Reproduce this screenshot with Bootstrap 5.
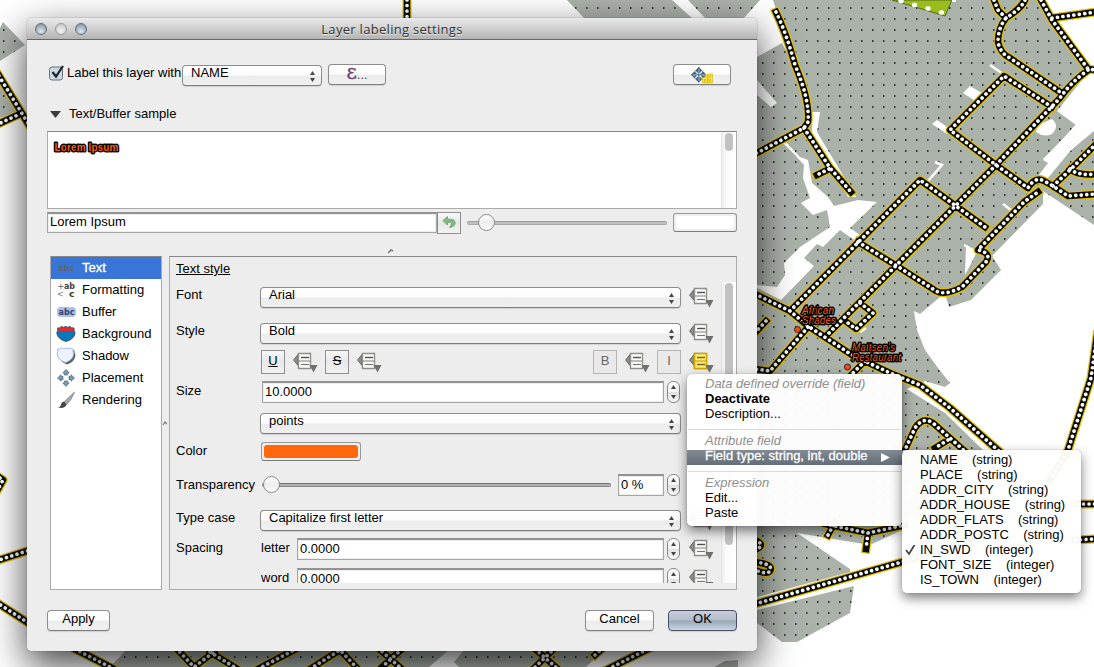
<!DOCTYPE html>
<html lang="en">
<head>
<meta charset="utf-8">
<title>Layer labeling settings</title>
<link rel="stylesheet" href="https://cdn.jsdelivr.net/npm/bootstrap@5.3.0/dist/css/bootstrap.min.css">
<script src="https://cdn.jsdelivr.net/npm/bootstrap@5.3.0/dist/js/bootstrap.bundle.min.js"></script>
<style>
body{width:1094px;height:667px;overflow:hidden;position:relative;background:#fff;color:#000;font:13px/15px "Liberation Sans",Arial,sans-serif}
.map-canvas{position:absolute;left:0;top:0}
.dialog-win{position:absolute;left:27px;top:18px;width:730px;height:633px;background:#ededed;border-radius:5px 5px 4px 4px;box-shadow:0 0 1px rgba(0,0,0,.7),0 14px 38px rgba(0,0,0,.75)}
.title-strip{height:22px;border-radius:5px 5px 0 0;background:linear-gradient(#e9e9e9,#d3d3d3 45%,#b3b3b3);border-bottom:1px solid #686868;padding-left:8px;position:relative}
.title-strip h1{font:13px/20px "Open Sans","Noto Sans",sans-serif;color:#333;margin:0;width:100%;text-align:center;position:absolute;left:0;top:1px;text-shadow:0 1px 0 #e8e8e8;letter-spacing:.3px}
.light{width:12px;height:12px;border-radius:50%;border:1px solid #5f6a75;background:radial-gradient(circle at 50% 75%,#dde6ee,#8798a8 85%);margin-right:8px}
.light.mid{border-color:#999;background:radial-gradient(circle at 50% 70%,#f2f2f2,#c5c5c5 90%)}
.mac-btn{height:21px;border:1px solid #8d8d8d;border-bottom-color:#7d7d7d;border-radius:4px;background:linear-gradient(#fff 0,#fcfcfc 48%,#ececec 52%,#f0f0f0 100%);box-shadow:0 1px 1px rgba(0,0,0,.12);display:flex;align-items:center;justify-content:center;padding:0 0 4px;color:#000;font-size:13px;line-height:15px;flex:none}
.mac-btn.ok{border-color:#4b4f66;background:linear-gradient(#c6ced9 0,#b3bdca 48%,#98a6b7 52%,#c9d6e2 100%)}
.combo{justify-content:space-between;padding:0 6px 0 8px}
.combo span{margin-top:-7px}
.combo svg{margin-top:1px}
.line-in{height:22px;background:#fff;border:1px solid #a6a6a6;border-top:2px solid #929292;box-shadow:inset 0 0 0 1px #ededed;padding:0 0 0 2px;line-height:17px;flex:none}
.spin{width:13px;height:22px;border:1px solid #888;border-radius:6px;background:linear-gradient(#fff,#f6f6f6 48%,#e2e2e2 52%,#f8f8f8);margin-left:3px;display:flex;justify-content:center;align-items:center;flex:none}
.tool{width:24px;height:24px;border:1px solid #8f8f8f;background:linear-gradient(#f7f7f7,#e8e8e8 50%,#f2f2f2);text-align:center;line-height:20px;flex:none}
.tool.dim{border-color:#b4b4b4;color:#666;background:#e9e9e9}
.track{height:4px;border-radius:2px;background:#c0c0c0;border:1px solid #aaa;border-top-color:#9b9b9b;position:relative;flex:none}
.track.strong{border-color:#888;border-top-color:#707070;background:#b0b0b0}
.knob{position:absolute;top:-8px;width:17px;height:17px;border-radius:50%;border:1px solid #8b8b8b;background:linear-gradient(#fff,#eee 50%,#fafafa)}
.swatch{border:1px solid #999;border-bottom-color:#7c7c7c;border-radius:3px;background:#eee;padding:2px;flex:none}
.swatch i{display:block;height:100%;border-radius:3px}
.preview-box{width:690px;height:78px;margin:5px 0 3px 20px;background:#fff;border:1px solid #aaa;border-top-color:#878787}
.halo{font-weight:bold;font-size:10px;fill:#ff5d00;stroke:#000;stroke-width:2.8px;paint-order:stroke;stroke-linejoin:round}
.scroll-lane{width:15px;background:linear-gradient(90deg,#ededed,#fafafa 30%,#fff);border-left:1px solid #e4e4e4;padding:1px 0 0 3px;flex:none}
.scroll-lane i{display:block;width:8px;border-radius:4px;background:#c1c1c1}
.pages{width:112px;height:334px;background:#fff;border:1px solid #aaa;border-top-color:#878787;flex:none}
.pages div{height:22px;display:flex;align-items:center;padding-left:5px;padding-bottom:1px}
.pages div svg{margin-right:5px;flex:none}
.pages .picked{background:#3875d7;color:#fff;-webkit-text-stroke:.35px #fff}
.form-frame{width:568px;height:334px;border:1px solid #aaa;border-top-color:#878787;flex:none}
.form-view{height:326px;overflow:hidden;width:551px}
.band{display:flex;align-items:center;padding-left:6px}
.band>label{width:84px;flex:none}
.up5{padding-bottom:6px}
.up3{padding-bottom:3px}
.dd{width:26px;height:21px;flex:none;margin-left:8px}
.mac-menu{position:absolute;background:rgba(255,255,255,.965);border-radius:5px;box-shadow:0 0 1px rgba(0,0,0,.5),0 5px 12px rgba(0,0,0,.5);white-space:pre}
.mac-menu div{height:15px;line-height:15px;padding-left:18px}
.mac-menu em{color:#8f8f8f}
.mac-menu hr{margin:0;border:0;border-top:1px solid #dadada;opacity:1}
.mac-menu .lit{background:linear-gradient(#828a94,#656d78);color:#fff;-webkit-text-stroke:.3px #fff;line-height:12px;position:relative}
</style>
</head>
<body>
<svg width="0" height="0" style="position:absolute">
<defs>
<g id="fieldIcon"><path d="M5 2.500 .6 8 5 13.500Z" fill="#8d8d8d" stroke="#666" stroke-width="1"/><path d="M5.500 1.500h12v15h-12Z" fill="#fff" stroke="#908f89" stroke-width="1.400"/><path d="M6 9h12" stroke="#908f89" stroke-width="1.200"/><path d="M8 5.500h8" stroke="#555" stroke-width="1.500"/><path d="M8 12.500h8" stroke="#777" stroke-width="1.200"/><path d="M16.500 13h8l-4 7.500Z" fill="#707070"/></g>
<g id="arrows"><path d="M0 4 2.500 0 5 4ZM0 7h5L2.500 11Z" fill="#444"/></g>
<g id="spinArrows"><path d="M0 4 2.500 0 5 4ZM0 10h5L2.500 14Z" fill="#444"/></g>
<g id="fourWay" fill="#7d9bb0" stroke="#4e6879" stroke-width=".7"><path id="headUp" d="M9 .5 12.200 4H10.700V6H7.300V4H5.800Z"/><use href="#headUp" transform="rotate(90 9 9)"/><use href="#headUp" transform="rotate(180 9 9)"/><use href="#headUp" transform="rotate(270 9 9)"/></g>
</defs></svg>

<svg class="map-canvas" width="1094" height="667" viewBox="0 0 1094 667">
<defs><pattern id="dots" width="11" height="11" patternUnits="userSpaceOnUse" x="0" y="0"><rect width="11" height="11" fill="#abb2aa"/><rect x="3" y="7" width="1" height="2" fill="#343934"/><rect x="4" y="7" width="1" height="2" fill="#6d736d"/></pattern></defs>
<g fill="url(#dots)">
<path d="M567 0H672L693 19H585ZM688 0H760L744 18 735 30 705 18ZM773 0H1043L1053 20 1090 70 1057 111 1076 125 1043 160 1048 163 1035 180 1094 131V225L1043 191 1043 204 992 256 1001 270 971 300 949 307 946 297 940 297 920 314 914 311 917 330 925 350 938 368 950 383 945 387 925 381 907 389 945 413 985 452 902 530 870 545 797 533 850 569 850 572 757 597V57L782 43 796 70Z"/>
<path d="M745 613 854 586 850 613 797 642H782L757 623ZM3 22 25 45 0 61V28ZM0 80 18 112 0 118ZM127 649H450L428 668H109ZM465 649H605L585 668H460L454 662ZM712 668 725 661 738 660V668Z"/>
</g>
<g fill="#fff">
<path d="M757 285 777 287 785 275 784 263 800 247 830 227 827 210 813 215 801 203 810 198 803 178 804 165 795 155 783 143 776 145 784 140 800 157 808 160 812 183 828 197 834 206 858 200 877 202 850 228 860 235 857 242 840 230 823 247 817 244 804 258 814 266 781 300 757 288Z"/>
<path d="M812 112 820 112 817 132 856 197 848 197 812 134ZM757 80 777 103 771 107 757 95ZM963 93 970 86 982 93 975 101ZM932 124 937 120 950 129 947 134ZM1038 125 1052 119Q1060 126 1052 134 1044 138 1036 132ZM966 245 977 252 965 275Z"/>
<path d="M1062 140 1094 104V122L1048 178 1035 180 1050 163 1043 159Z"/>
<path d="M928 181 942 165 935 162M990 65 1003 74M1003 204 1012 211M964 245 975 251M950 132 995 167M790 315 851 358M860 332 866 328" fill="none" stroke="#fff" stroke-width="2.500"/>
</g>
<path d="M892 0 945 16 952 0Z" fill="#9abb1c" stroke="#556b21"/><path d="M900.500 1h1M914 5h1M927.500 8.500h1M941 12.500h1M954 0h.1" stroke="#fff" stroke-width="4.500" stroke-linecap="round"/>
<defs><path id="roads" fill="none" d="M776 12Q786 32 795 65 810 100 808 122L804 128 755 154M804 128 830 168 851 192M829 169 817 175M994 0 998 10 1006 18M1025 0Q1022 8 1006 18 998 28 998 42 1000 53 1010 58L1060 92M1041 0 1052 20 1088 69 1096 70M1052 18 1096 12M1088 70Q1070 83 1060 98L996 165 826 336M1052 107 1004 76 950 130 996 165 1028 188Q1035 176 1044 181L1053 186 1068 196 1096 194M1053 186 1072 168 1096 144M1070 169Q1078 176 1096 174M790 311 920 180 985 227M858 242 897 266 936 291Q945 296 962 287L986 262Q992 253 978 250L1024 202 1038 192M755 294 790 311 808 326 852 355 890 373 920 385 950 408 1000 452M808 327 770 371 755 369M865 361 845 381M860 303 873 313 856 329 844 320M766 321 752 336M1097 335 1091 378 1068 450 1050 480M904 452 915 428Q923 416 933 423L968 454M948 440 935 448M1078 504 1096 504M1075 540 1096 539M828 535 835 522M825 524 868 533 905 525M868 533 866 549M755 604 902 562 970 540M755 540Q767 545 755 550M755 562Q774 564 770 571 767 575 755 570M0 478 3 480-2 489M-4 71 29 125M-4 125 20 114M-4 561 30 550M-4 602 30 624M407 0V20M75 649 112 668M176 648 194 667 214 652M210 652 236 668M258 669 296 649M310 669 340 650 358 669M378 648 402 669M402 649 382 667M535 649 558 669M555 648 533 669M595 655 605 646M608 669 652 647"/></defs>
<use href="#roads" stroke="#dfc100" stroke-width="9" stroke-linejoin="round" stroke-linecap="square"/>
<use href="#roads" stroke="#090909" stroke-width="6.500" stroke-linejoin="round" stroke-linecap="square"/>
<use href="#roads" stroke="#fff" stroke-width="3.700" stroke-linecap="round" stroke-linejoin="round" stroke-dasharray=".01 5.500"/>
<g fill="#ff4b0b" stroke="#222" stroke-width="1"><circle cx="797.500" cy="329.500" r="3"/><circle cx="847.500" cy="367" r="3"/></g>
<g class="halo" style="font-style:italic;font-weight:normal"><g stroke="#000"><text x="802" y="313.500" textLength="32">African</text><text x="802" y="323.500" textLength="34">Shades</text><text x="852" y="351" textLength="43">Mattsen's</text><text x="852" y="361" textLength="49">Restaurant</text></g></g>
</svg>

<main class="dialog-win">
<header class="title-strip d-flex align-items-center"><i class="light"></i><i class="light mid"></i><i class="light"></i><h1>Layer labeling settings</h1></header>

<div class="d-flex" style="padding:24px 0 0 22px;height:57px">
<svg width="16" height="18" viewBox="0 0 16 18"><rect x=".5" y="3" width="13" height="13" rx="2.500" fill="#cfd9e2" stroke="#657080"/><path d="M3.500 8 7 12.500 14 2" fill="none" stroke="#15222e" stroke-width="2.200"/></svg>
<span style="width:117px;padding:1px 0 0 2px;white-space:nowrap">Label this layer with</span>
<div class="mac-btn combo" style="width:140px;margin-top:1px"><span>NAME</span><svg width="5" height="11"><use href="#arrows"/></svg></div>
<div class="mac-btn" style="width:58px;margin-left:6px;padding-bottom:1px"><span style="font:20px/18px 'DejaVu Serif',serif;color:#69406f;margin-top:-5px;-webkit-text-stroke:.3px #69406f">ε</span><span style="color:#444">...</span></div>
<div class="mac-btn ms-auto" style="width:58px;margin-right:26px;padding:0"><svg width="22" height="18" viewBox="0 0 22 18"><g transform="translate(0,1) scale(.86)"><path d="M9 0 18 9 9 18 0 9Z" fill="#45647c"/><path d="M9 2v14M2 9h14M5 5l8 8M13 5l-8 8" stroke="#dce7ef" stroke-width="1.500"/><path d="M9 0v18M0 9h18" stroke="#45647c" stroke-width="1"/></g><path d="M11.500 12.500h4V8M12.500 12.500V16h3v-3M18 8v4h2.500V7.500M18 12.500h2.500V16H18Z" fill="none" stroke="#d6b100" stroke-width="2.400"/><path d="M11.500 12.500h4V8M12.500 12.500V16h3v-3M18 8v4h2.500V7.500M18 12.500h2.500V16H18Z" fill="none" stroke="#ffe347" stroke-width="1.200"/></svg></div>
</div>

<div class="d-flex align-items-center" style="height:25px;margin-top:4px;padding-left:23px"><svg width="11" height="7" style="margin-top:2px"><path d="M0 0H11L5.500 7Z" fill="#3d3d3d"/></svg><span style="margin-left:8px">Text/Buffer sample</span></div>

<section class="preview-box d-flex justify-content-between"><svg width="90" height="30"><text class="halo" x="6.500" y="19" textLength="64">Lorem Ipsum</text></svg><div class="scroll-lane"><i style="height:18px"></i></div></section>
<div class="d-flex align-items-center" style="height:21px;margin-left:20px">
<div class="line-in" style="width:390px;height:21px;line-height:16px">Lorem Ipsum</div>
<div class="tool" style="height:22px"><svg width="14" height="13" viewBox="0 0 14 13" style="display:block;margin:3px auto"><path d="M5.500 .5 .8 4.800 5.500 9V6.300H8.500Q11 6.800 7.500 11.500 13.500 10.500 13.200 6.500 12.500 3.200 8.500 3.200H5.500Z" fill="#82b986" stroke="#62a06a" stroke-width=".8"/></svg></div>
<div class="track" style="width:200px;margin-left:6px"><i class="knob" style="left:10px"></i></div>
<div class="swatch" style="width:64px;height:19px;margin-left:6px"><i style="background:#fff"></i></div>
</div>
<div style="height:23px"><svg width="6" height="5" style="display:block;margin-left:361px;transform:translateY(16px)"><path d="M0 4 3 1 5 2" fill="none" stroke="#777" stroke-width="1.500"/></svg></div>

<div class="d-flex" style="margin-left:23px">
<nav class="pages">
<div class="picked"><svg width="21" height="18"><text x="2" y="12" style="font:bold 9px 'DejaVu Sans'" fill="#5c6578" stroke="none" textLength="16" lengthAdjust="spacingAndGlyphs">abc</text></svg>Text</div>
<div><svg width="21" height="18"><text x="1" y="8" style="font:9px 'DejaVu Sans'" fill="#666">+</text><text x="8" y="8" style="font:bold 9px 'DejaVu Sans'" fill="#444" textLength="11" lengthAdjust="spacingAndGlyphs">ab</text><text x="1" y="16" style="font:8px 'DejaVu Sans'" fill="#777">&lt;</text><text x="13" y="16" style="font:bold 9px 'DejaVu Sans'" fill="#333">c</text></svg>Formatting</div>
<div><svg width="21" height="18"><rect x="1" y="4" width="19" height="10" rx="4" fill="#a9bff2"/><text x="2.500" y="12" style="font:bold 9px 'DejaVu Sans'" fill="#36415f" textLength="16" lengthAdjust="spacingAndGlyphs">abc</text></svg>Buffer</div>
<div><svg width="21" height="18"><path d="M1.500 3Q4 3.500 5.500 1.500 7.500 3 9.500 1.500 12 3 14 1.500 15.500 3.500 18 3 17.500 5 19 8 18.500 14 10 16.500 1.500 14 .8 8 2.500 5 1.500 3Z" fill="#0878bd" stroke="#36566c"/><path d="M2 3.300Q4 3.500 5.500 2 7.500 3.300 9.500 2 12 3.300 14 2 15.500 3.500 17.500 3.300L17 6H2.500Z" fill="#e22b2b"/></svg>Background</div>
<div><svg width="21" height="18"><path d="M3.500 4Q10 2 18.500 3.500 18 5 19.500 8 19 15 11 17.500 4 15 3 9Z" fill="#5b5f68"/><path d="M1.500 2Q4 2.500 5.500 1 7.500 2.500 9.500 1 12 2.500 14 1 15.500 2.500 17.500 2 16.500 4 17.500 7 17 13 9.500 15.500 2 13 1 7 2.500 4 1.500 2Z" fill="#edf2ff" stroke="#a3b9ed"/></svg>Shadow</div>
<div><svg width="21" height="18"><use href="#fourWay" x="1"/></svg>Placement</div>
<div><svg width="21" height="18"><path d="M18.500 1 8 11 10 14Q15 10 18.500 1Z" fill="#aaa" stroke="#777" stroke-width=".7"/><path d="M8 10.500Q5 11 5 14 4 16 2 16.500 9 18 10.500 13.500Z" fill="#484848"/></svg>Rendering</div>
</nav>
<div class="d-flex align-items-center" style="width:7px"><svg width="5" height="5"><path d="M1 4 3 1 5 3" fill="none" stroke="#777" stroke-width="1.200"/></svg></div>

<section class="form-frame d-flex">
<div class="form-view">
<div style="height:24px;padding:4px 0 0 6px"><u>Text style</u></div>
<div class="band" style="margin-top:6px;height:21px"><label class="up5">Font</label><div class="mac-btn combo" style="width:421px"><span>Arial</span><svg width="5" height="11"><use href="#arrows"/></svg></div><svg class="dd"><use href="#fieldIcon"/></svg></div>
<div class="band" style="margin-top:15px;height:21px"><label class="up5">Style</label><div class="mac-btn combo" style="width:421px"><span>Bold</span><svg width="5" height="11"><use href="#arrows"/></svg></div><svg class="dd"><use href="#fieldIcon"/></svg></div>
<div class="band" style="margin-top:6px;height:24px;padding-left:91px"><div class="tool"><u>U</u></div><svg class="dd"><use href="#fieldIcon"/></svg><div class="tool" style="margin-left:6px"><s>S</s></div><svg class="dd"><use href="#fieldIcon"/></svg><div class="tool dim" style="margin-left:210px">B</div><svg class="dd"><use href="#fieldIcon"/></svg><div class="tool dim" style="margin-left:6px">I</div><svg class="dd"><use href="#fieldIcon"/><path d="M5.500 1.500h12v15h-12Z" fill="#ffeb74" stroke="#cda800" stroke-width="1.600"/><path d="M6 9h12" stroke="#cda800" stroke-width="1.200"/><path d="M8 5.500h8M8 12.500h8" stroke="#776725" stroke-width="1.400"/><path d="M16.500 13h8l-4 7.500Z" fill="#707070"/></svg></div>
<div class="band" style="margin-top:7px;height:22px"><label class="up3" style="width:86px">Size</label><div class="line-in" style="width:402px">10.0000</div><div class="spin"><svg width="5" height="14"><use href="#spinArrows"/></svg></div></div>
<div class="band" style="margin-top:10px;height:21px"><label></label><div class="mac-btn combo" style="width:421px"><span>points</span><svg width="5" height="11"><use href="#arrows"/></svg></div></div>
<div class="band" style="margin-top:8px;height:19px"><label style="width:85px;padding-bottom:2px">Color</label><div class="swatch" style="width:100px;height:19px"><i style="background:#ff680b"></i></div></div>
<div class="band" style="margin-top:13px;height:22px"><label style="width:86px;white-space:nowrap;padding-bottom:2px">Transparency</label><div class="track strong" style="width:349px"><i class="knob" style="left:0"></i></div><div class="line-in" style="width:46px;margin-left:7px">0 %</div><div class="spin"><svg width="5" height="14"><use href="#spinArrows"/></svg></div></div>
<div class="band" style="margin-top:14px;height:21px"><label class="up5">Type case</label><div class="mac-btn combo" style="width:421px"><span>Capitalize first letter</span><svg width="5" height="11"><use href="#arrows"/></svg></div><svg class="dd"><use href="#fieldIcon"/></svg></div>
<div class="band" style="margin-top:7px;height:22px"><label class="up3" style="width:85px">Spacing</label><span class="up3" style="width:36px">letter</span><div class="line-in" style="width:367px">0.0000</div><div class="spin"><svg width="5" height="14"><use href="#spinArrows"/></svg></div><svg class="dd" style="margin-left:9px"><use href="#fieldIcon"/></svg></div>
<div class="band" style="margin-top:8px;height:22px"><label style="width:85px"></label><span class="up3" style="width:36px">word</span><div class="line-in" style="width:367px;line-height:17px">0.0000</div><div class="spin"><svg width="5" height="14"><use href="#spinArrows"/></svg></div><svg class="dd" style="margin-left:9px"><use href="#fieldIcon"/></svg></div>
</div>
<div class="scroll-lane" style="margin-top:25px;height:301px"><i style="height:262px"></i></div>
</section>
</div>

<footer class="d-flex" style="padding:20px 20px 0"><div class="mac-btn" style="width:63px">Apply</div><div class="mac-btn ms-auto" style="width:69px">Cancel</div><div class="mac-btn ok" style="width:69px;margin-left:14px">OK</div></footer>
</main>

<div class="mac-menu" style="left:687px;top:374px;width:215px;height:152px;padding-top:2px"><div><em>Data defined override (field)</em></div><div><b>Deactivate</b></div><div>Description...</div><hr style="margin:8px 1px 3px"><div><em>Attribute field</em></div><div class="lit" style="margin-top:2px">Field type: string, int, double<svg width="9" height="9" style="position:absolute;right:12px;top:3px"><path d="M0 0 9 4.500 0 9Z" fill="#fff"/></svg></div><hr style="margin:6px 1px 3px"><div><em>Expression</em></div><div>Edit...</div><div>Paste</div></div>
<div class="mac-menu" style="left:902px;top:450px;width:179px;height:143px;padding-top:2px"><div>NAME    (string)</div><div>PLACE    (string)</div><div>ADDR_CITY    (string)</div><div>ADDR_HOUSE    (string)</div><div>ADDR_FLATS    (string)</div><div>ADDR_POSTC    (string)</div><div class="position-relative"><svg width="11" height="11" style="position:absolute;left:3px;top:3px"><path d="M1 5 4 9 9.500 0" fill="none" stroke="#444" stroke-width="1.800"/></svg>IN_SWD    (integer)</div><div>FONT_SIZE    (integer)</div><div>IS_TOWN    (integer)</div></div>
</body>
</html>
